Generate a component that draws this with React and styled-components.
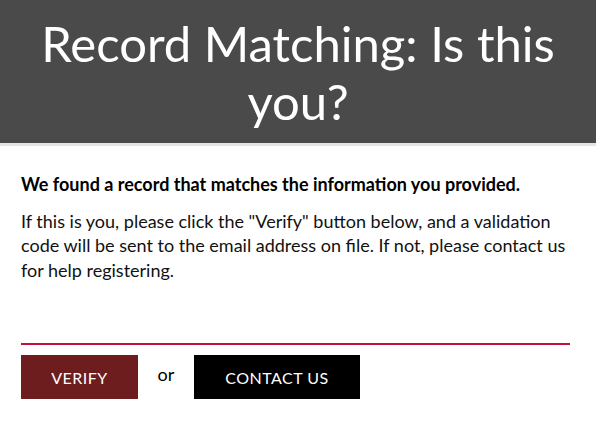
import React from "react";
import styled, { createGlobalStyle } from "styled-components";

const GlobalStyle = createGlobalStyle`
  body {
    margin: 0;
    background: #fff;
    font-family: Lato, "Open Sans", sans-serif;
  }
`;

const Styled = {
  Page: styled.div`
    display: flex;
    flex-direction: column;
    width: 596px;
  `,
  Header: styled.header`
    background: #4a4a4a;
    border-bottom: 3px solid #e4e4e4;
    height: 143px;
    display: flex;
    align-items: center;
    justify-content: center;
    h1 {
      margin: 0;
      padding: 0 30px;
      color: #fff;
      text-align: center;
      font-family: Lato, sans-serif;
      font-weight: 400;
      font-size: 49px;
      line-height: 58px;
    }
  `,
  Body: styled.section`
    padding: 26px 26px 0 21px;
    color: #111;
    font-size: 18px;
    line-height: 24.5px;
    p {
      margin: 0 0 12px;
    }
  `,
  Lead: styled.p`
    font-weight: 700;
    font-size: 18px;
    color: #000;
  `,
  Divider: styled.hr`
    margin: 61px 0 10px;
    border: 0;
    height: 2px;
    background: #c4103d;
  `,
  Actions: styled.div`
    display: flex;
    align-items: center;
  `,
  Button: styled.button`
    height: 44px;
    width: ${(p) => p.$width}px;
    border: 0;
    background: ${(p) => p.$bg};
    color: #fff;
    font-family: Lato, sans-serif;
    font-size: 16px;
    letter-spacing: 0.5px;
    text-transform: uppercase;
    cursor: pointer;
  `,
  Or: styled.span`
    width: 56px;
    text-align: center;
    font-size: 18px;
    color: #000;
    padding-bottom: 6px;
  `,
};

const App = () => (
  <Styled.Page>
    <GlobalStyle />
    <Styled.Header>
      <h1>Record Matching: Is this you?</h1>
    </Styled.Header>
    <Styled.Body>
      <Styled.Lead>We found a record that matches the information you provided.</Styled.Lead>
      <p>
        If this is you, please click the "Verify" button below, and a validation code will be
        sent to the email address on file. If not, please contact us for help registering.
      </p>
      <Styled.Divider />
      <Styled.Actions>
        <Styled.Button $bg="#6d1d1d" $width={117}>Verify</Styled.Button>
        <Styled.Or>or</Styled.Or>
        <Styled.Button $bg="#000" $width={166}>Contact Us</Styled.Button>
      </Styled.Actions>
    </Styled.Body>
  </Styled.Page>
);

export default App;
